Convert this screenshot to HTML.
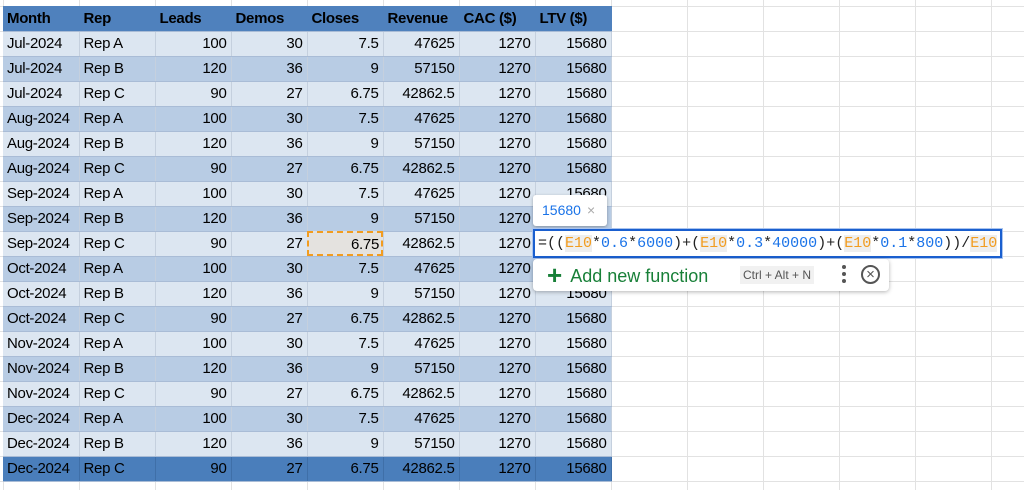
<!DOCTYPE html>
<html><head><meta charset="utf-8"><style>
body{margin:0;width:1024px;height:490px;overflow:hidden;background:#fff;font-family:"Liberation Sans",sans-serif;position:relative}
.grid{position:absolute;left:0;top:0;width:1024px;height:490px;
background-image:linear-gradient(#e2e2e2 1px,transparent 1px),linear-gradient(90deg,#e2e2e2 1px,transparent 1px);
background-size:76px 25px;background-position:3px 6px}
table{position:absolute;left:3px;top:6px;border-collapse:collapse;table-layout:fixed}
td{width:76px;height:25px;padding:0 4px;box-sizing:border-box;font-size:15px;color:#000;border-right:1px solid #c5d0de;border-bottom:1px solid #a9bcd6;white-space:nowrap;overflow:hidden;letter-spacing:-0.3px}
td.n{text-align:right}
tr.h td{background:#4f81bd;font-weight:bold;border-right:1px solid #4f81bd}
tr.a td{background:#dce6f1}
tr.b td{background:#b8cce4}
tr.l td{background:#4a7ebb;border-right:1px solid #3f6fa8}
.sel{position:absolute;left:307px;top:231px;width:76px;height:25px;box-sizing:border-box;border:2px dashed #f29c1f;background:#e4e2df;font-size:15px;text-align:right;padding:3px 2px;line-height:18px;letter-spacing:-0.3px}
.tip{position:absolute;left:533px;top:195px;width:74px;height:31px;background:#fff;box-shadow:0 1px 3px rgba(0,0,0,.3);border-radius:3px;font-size:14px;color:#1a73e8;line-height:31px;padding-left:9px;box-sizing:border-box}
.tip span{color:#aaa;margin-left:6px}
.fx{position:absolute;left:533px;top:229px;width:469px;height:29px;box-sizing:border-box;border:2px solid #1a5fcf;background:#fff;font-family:"Liberation Mono",monospace;font-size:15px;line-height:25px;padding-left:3px;color:#222;white-space:nowrap;box-shadow:0 0 0 1px #aac4ee}
.r{color:#f29c1f;background:#eeeeee}.b{color:#1a73e8}
.pop{position:absolute;left:533px;top:259px;width:356px;height:32px;background:#fff;border-radius:4px;box-shadow:0 1px 4px rgba(0,0,0,.3)}
.pop .add{position:absolute;left:14px;top:3px;font-size:18px;color:#188038;line-height:26px}
.pop .add b{font-size:26px;margin-right:8px;vertical-align:-2px}
.kb{position:absolute;left:207px;top:7px;font-size:12px;color:#555;background:#f1f1f1;padding:2px 3px}
.dots{position:absolute;left:309px;top:6px;width:4px}
.dots i{display:block;width:4px;height:4px;border-radius:2px;background:#555;margin-bottom:3px}
.cx{position:absolute;left:328px;top:6px;width:15px;height:15px;border:2px solid #555;border-radius:50%;font-size:15px;line-height:15px;text-align:center;color:#555}
</style></head><body>
<div class="grid"></div>
<table>
<tr class="h"><td>Month</td><td>Rep</td><td>Leads</td><td>Demos</td><td>Closes</td><td>Revenue</td><td>CAC ($)</td><td>LTV ($)</td></tr>
<tr class="a"><td>Jul-2024</td><td>Rep A</td><td class="n">100</td><td class="n">30</td><td class="n">7.5</td><td class="n">47625</td><td class="n">1270</td><td class="n">15680</td></tr>
<tr class="b"><td>Jul-2024</td><td>Rep B</td><td class="n">120</td><td class="n">36</td><td class="n">9</td><td class="n">57150</td><td class="n">1270</td><td class="n">15680</td></tr>
<tr class="a"><td>Jul-2024</td><td>Rep C</td><td class="n">90</td><td class="n">27</td><td class="n">6.75</td><td class="n">42862.5</td><td class="n">1270</td><td class="n">15680</td></tr>
<tr class="b"><td>Aug-2024</td><td>Rep A</td><td class="n">100</td><td class="n">30</td><td class="n">7.5</td><td class="n">47625</td><td class="n">1270</td><td class="n">15680</td></tr>
<tr class="a"><td>Aug-2024</td><td>Rep B</td><td class="n">120</td><td class="n">36</td><td class="n">9</td><td class="n">57150</td><td class="n">1270</td><td class="n">15680</td></tr>
<tr class="b"><td>Aug-2024</td><td>Rep C</td><td class="n">90</td><td class="n">27</td><td class="n">6.75</td><td class="n">42862.5</td><td class="n">1270</td><td class="n">15680</td></tr>
<tr class="a"><td>Sep-2024</td><td>Rep A</td><td class="n">100</td><td class="n">30</td><td class="n">7.5</td><td class="n">47625</td><td class="n">1270</td><td class="n">15680</td></tr>
<tr class="b"><td>Sep-2024</td><td>Rep B</td><td class="n">120</td><td class="n">36</td><td class="n">9</td><td class="n">57150</td><td class="n">1270</td><td class="n">15680</td></tr>
<tr class="a"><td>Sep-2024</td><td>Rep C</td><td class="n">90</td><td class="n">27</td><td class="n"></td><td class="n">42862.5</td><td class="n">1270</td><td class="n">15680</td></tr>
<tr class="b"><td>Oct-2024</td><td>Rep A</td><td class="n">100</td><td class="n">30</td><td class="n">7.5</td><td class="n">47625</td><td class="n">1270</td><td class="n">15680</td></tr>
<tr class="a"><td>Oct-2024</td><td>Rep B</td><td class="n">120</td><td class="n">36</td><td class="n">9</td><td class="n">57150</td><td class="n">1270</td><td class="n">15680</td></tr>
<tr class="b"><td>Oct-2024</td><td>Rep C</td><td class="n">90</td><td class="n">27</td><td class="n">6.75</td><td class="n">42862.5</td><td class="n">1270</td><td class="n">15680</td></tr>
<tr class="a"><td>Nov-2024</td><td>Rep A</td><td class="n">100</td><td class="n">30</td><td class="n">7.5</td><td class="n">47625</td><td class="n">1270</td><td class="n">15680</td></tr>
<tr class="b"><td>Nov-2024</td><td>Rep B</td><td class="n">120</td><td class="n">36</td><td class="n">9</td><td class="n">57150</td><td class="n">1270</td><td class="n">15680</td></tr>
<tr class="a"><td>Nov-2024</td><td>Rep C</td><td class="n">90</td><td class="n">27</td><td class="n">6.75</td><td class="n">42862.5</td><td class="n">1270</td><td class="n">15680</td></tr>
<tr class="b"><td>Dec-2024</td><td>Rep A</td><td class="n">100</td><td class="n">30</td><td class="n">7.5</td><td class="n">47625</td><td class="n">1270</td><td class="n">15680</td></tr>
<tr class="a"><td>Dec-2024</td><td>Rep B</td><td class="n">120</td><td class="n">36</td><td class="n">9</td><td class="n">57150</td><td class="n">1270</td><td class="n">15680</td></tr>
<tr class="l"><td>Dec-2024</td><td>Rep C</td><td class="n">90</td><td class="n">27</td><td class="n">6.75</td><td class="n">42862.5</td><td class="n">1270</td><td class="n">15680</td></tr>
</table>
<div class="sel">6.75</div>
<div class="tip">15680<span>×</span></div>
<div class="fx">=((<span class="r">E10</span>*<span class="b">0.6</span>*<span class="b">6000</span>)+(<span class="r">E10</span>*<span class="b">0.3</span>*<span class="b">40000</span>)+(<span class="r">E10</span>*<span class="b">0.1</span>*<span class="b">800</span>))/<span class="r">E10</span></div>
<div class="pop"><div class="add"><b>+</b>Add new function</div><div class="kb">Ctrl + Alt + N</div><div class="dots"><i></i><i></i><i></i></div><div class="cx">×</div></div>
</body></html>
